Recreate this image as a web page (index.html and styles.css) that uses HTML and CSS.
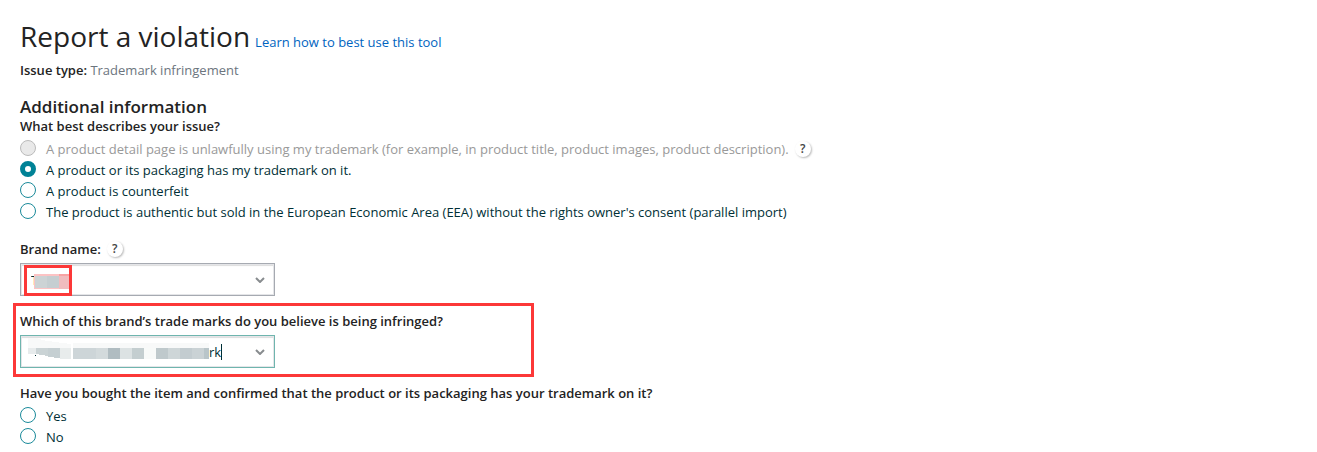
FILE: index.html
```html
<!DOCTYPE html>
<html lang="en">

<head>
    <meta charset="UTF-8">
    <meta name="viewport" content="width=device-width, initial-scale=1.0">
    <title>Report a violation</title>
    <link rel="stylesheet" href="styles.css">
</head>

<body>
    <main class="page">
        <header class="page-header">
            <h1>Report a violation</h1>
            <a href="#">Learn how to best use this tool</a>
        </header>
        <p class="issue-type"><b>Issue type:</b> <span>Trademark infringement</span></p>

        <form>
            <h2>Additional information</h2>
            <fieldset class="question">
                <legend>What best describes your issue?</legend>
                <div class="option disabled">
                    <input type="radio" id="detailPage" name="issue" disabled>
                    <label for="detailPage">A product detail page is unlawfully using my trademark (for example, in product title, product images, product description).</label>
                    <button type="button" class="help">?</button>
                </div>
                <div class="option">
                    <input type="radio" id="packaging" name="issue" checked>
                    <label for="packaging">A product or its packaging has my trademark on it.</label>
                </div>
                <div class="option">
                    <input type="radio" id="counterfeit" name="issue">
                    <label for="counterfeit">A product is counterfeit</label>
                </div>
                <div class="option">
                    <input type="radio" id="parallelImport" name="issue">
                    <label for="parallelImport">The product is authentic but sold in the European Economic Area (EEA) without the rights owner's consent (parallel import)</label>
                </div>
            </fieldset>

            <div class="form-group">
                <div class="label-row">
                    <label for="brand">Brand name:</label>
                    <button type="button" class="help">?</button>
                </div>
                <div class="combo">
                    <input type="text" id="brand" name="brand" value="T">
                    <svg class="arrow" viewBox="0 0 10 6"><path d="M1 1l4 4 4-4" /></svg>
                    <svg class="mask mask-brand" viewBox="0 0 37 15" shape-rendering="crispEdges">
                        <path fill="#fcc3c4" d="M0 0h25v15H0z" />
                        <path fill="#f7a3a4" d="M25 0h12v2H25z" />
                        <path fill="#f0bcbe" d="M25 2h12v13H25z" />
                        <path fill="#ccd3d5" d="M1 2h12v12H1z" />
                        <path fill="#c5ced1" d="M13 2h12v12H13z" />
                    </svg>
                    <span class="highlight highlight-brand"></span>
                </div>
            </div>

            <div class="form-group">
                <div class="label-row">
                    <label for="mark">Which of this brand’s trade marks do you believe is being infringed?</label>
                </div>
                <div class="combo active">
                    <svg class="mask mask-mark" viewBox="0 0 181 21" shape-rendering="crispEdges">
                        <path fill="#f8f9f9" d="M0 0h9l5 2 13 2 16 2v4H0zM45 5h136v5H45z" />
                        <path fill="#e7ebec" d="M0 10h8v6H0z" />
                        <path fill="#cad3d5" d="M8 10h12v8l-12-2z" />
                        <path fill="#c5cfd2" d="M20 10h12v10l-12-1z" />
                        <path fill="#e8ecec" d="M32 10h11v11H32z" />
                        <path fill="#cdd5d8" d="M45 10h23v11H45z" />
                        <path fill="#d3dadc" d="M68 10h12v11H68z" />
                        <path fill="#b0bcc1" d="M80 10h12v11H80z" />
                        <path fill="#dce2e3" d="M92 10h12v11H92z" />
                        <path fill="#c4ced0" d="M104 10h12v11h-12z" />
                        <path fill="#f8faf9" d="M116 10h12v11h-12z" />
                        <path fill="#bfc9cc" d="M128 10h12v11h-12z" />
                        <path fill="#ced6d8" d="M140 10h12v11h-12z" />
                        <path fill="#c3ccd0" d="M152 10h12v11h-12z" />
                        <path fill="#cad2d5" d="M164 10h12v11h-12z" />
                        <path fill="#b9c5c9" d="M176 10h5v11h-5z" />
                        <path fill="#002f36" d="M7 17h1v1H7z" />
                    </svg>
                    <input type="text" id="mark" name="mark" value="rk">
                    <span class="caret"></span>
                    <svg class="arrow" viewBox="0 0 10 6"><path d="M1 1l4 4 4-4" /></svg>
                </div>
                <span class="highlight highlight-mark"></span>
            </div>

            <fieldset class="question purchase">
                <legend>Have you bought the item and confirmed that the product or its packaging has your trademark on it?</legend>
                <div class="option">
                    <input type="radio" id="boughtYes" name="bought">
                    <label for="boughtYes">Yes</label>
                </div>
                <div class="option">
                    <input type="radio" id="boughtNo" name="bought">
                    <label for="boughtNo">No</label>
                </div>
            </fieldset>
        </form>
    </main>
</body>

</html>
```
FILE: styles.css
```css
* {
    box-sizing: border-box;
}

body {
    margin: 0;
    background: #fff;
    color: #232323;
    font-family: "Open Sans", "Noto Sans", sans-serif;
    font-size: 13px;
    line-height: 20px;
}

h1,
h2,
p {
    margin: 0;
}

.page {
    padding: 16px 20px 4px;
}

.page-header {
    display: flex;
    align-items: baseline;
    gap: 5px;
}

h1 {
    font-size: 28px;
    font-weight: 400;
    line-height: 40px;
}

a {
    color: #0064c0;
    text-decoration: none;
}

.issue-type {
    margin-top: 4px;
}

.issue-type b {
    font-weight: 600;
}

.issue-type span {
    color: #6c757e;
}

h2 {
    margin-top: 18px;
    font-size: 17px;
    font-weight: 600;
    line-height: 18px;
}

.question {
    margin: 0;
    padding: 0;
    border: 0;
}

.purchase {
    margin-top: 15px;
}

legend,
.label-row {
    padding: 0;
    font-weight: 600;
}

legend {
    padding-bottom: 2px;
}

.option,
.label-row {
    display: flex;
    align-items: center;
}

.option {
    height: 21px;
    gap: 10px;
    color: #002f36;
}

.option input {
    appearance: none;
    flex: none;
    width: 16px;
    height: 16px;
    margin: 0 0 2px;
    border: 1px solid #1a8a9a;
    border-radius: 50%;
    background: #fff;
}

.option input:checked {
    border: 5px solid #008296;
}

.disabled {
    gap: 6px;
    color: #999;
}

.disabled label {
    margin-left: 4px;
}

.option input:disabled {
    border-color: #bbb;
    background: #e9e9e9;
}

.help {
    width: 16px;
    height: 16px;
    padding: 0;
    border: 0;
    border-radius: 50%;
    background: #fff;
    box-shadow: 1px 1px 2px #bbb;
    color: #444;
    font: 600 12px/16px "Open Sans", sans-serif;
}

.form-group {
    position: relative;
    margin-top: 15px;
}

.question + .form-group {
    margin-top: 17px;
}

.label-row {
    height: 20px;
    gap: 6px;
}

.combo {
    position: relative;
    display: flex;
    align-items: center;
    width: 255px;
    height: 33px;
    margin-top: 4px;
    padding: 0 9px 0 10px;
    border: 1px solid #a6aab1;
    box-shadow: inset 0 0 0 1px #e4e5e8, inset 0 2px 1px #ddd;
}

.combo.active {
    padding-left: 7px;
    border-color: #6fb5ae;
}

.combo input {
    min-width: 0;
    flex: 1;
    padding: 0;
    border: 0;
    outline: 0;
    background: transparent;
    color: #002f36;
    font: inherit;
}

.combo.active input {
    flex: none;
    width: 12px;
}

.caret {
    width: 1px;
    height: 16px;
    background: #002f36;
}

.arrow {
    width: 10px;
    height: 6px;
    margin-left: auto;
    fill: none;
    stroke: #888c8f;
    stroke-width: 2;
}

.mask {
    flex: none;
}

/* sits over the value of the field */
.mask-brand {
    position: absolute;
    top: 10px;
    left: 13px;
    width: 37px;
    height: 15px;
}

.mask-mark {
    width: 181px;
    height: 21px;
    margin-bottom: 6px;
}

.highlight {
    position: absolute;
    border: 3px solid #fc3838;
    pointer-events: none;
}

.highlight-brand {
    top: 1px;
    left: 3px;
    width: 48px;
    height: 31px;
}

.highlight-mark {
    top: -8px;
    left: -7px;
    width: 521px;
    height: 74px;
}

@media (max-width: 560px) {
    .highlight-mark {
        width: calc(100% + 14px);
    }
}
```
